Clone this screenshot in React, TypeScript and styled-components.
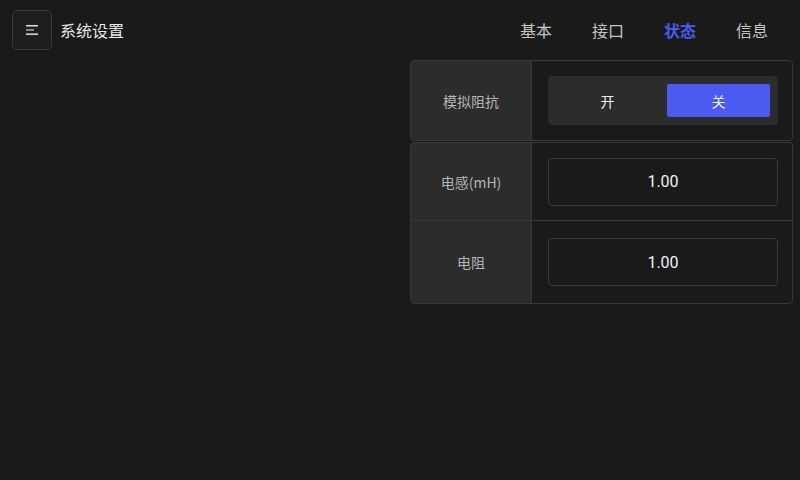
import React, { useState } from 'react';
import styled, { createGlobalStyle } from 'styled-components';

const GlobalStyle = createGlobalStyle`
  html, body {
    margin: 0;
    padding: 0;
    background: #1a1a1a;
  }
  body {
    font-family: "Noto Sans CJK SC", "Noto Sans", Roboto, sans-serif;
    color: #e6e6e6;
  }
`;

const Page = styled.div`
  width: 800px;
  height: 480px;
  background: #1a1a1a;
  display: flex;
  flex-direction: column;
`;

const TopBar = styled.div`
  height: 60px;
  box-sizing: border-box;
  padding: 10px 12px;
  display: flex;
  align-items: center;
  justify-content: space-between;
`;

const TitleGroup = styled.div`
  display: flex;
  align-items: center;
  gap: 8px;
`;

const MenuButton = styled.button`
  width: 40px;
  height: 40px;
  box-sizing: border-box;
  border: 1px solid #383838;
  border-radius: 5px;
  background: #1e1e1e;
  padding: 0;
  display: flex;
  align-items: center;
  justify-content: center;
`;

const Title = styled.span`
  font-size: 16px;
  color: #e8e8e8;
`;

const Tabs = styled.div`
  display: flex;
  align-items: center;
  gap: 40px;
  padding-right: 20px;
`;

const Tab = styled.span<{ $active?: boolean }>`
  font-size: 16px;
  color: ${(p) => (p.$active ? '#4b5bef' : '#c4c4c4')};
  font-weight: ${(p) => (p.$active ? 700 : 400)};
`;

const Main = styled.div`
  display: flex;
  justify-content: flex-end;
  padding-right: 7px;
`;

const Panel = styled.div`
  width: 383px;
  display: flex;
  flex-direction: column;
  gap: 1px;
`;

const Card = styled.div`
  border: 1px solid #383838;
  border-radius: 4px;
  overflow: hidden;
  display: flex;
  flex-direction: column;
`;

const Row = styled.div<{ $h: number }>`
  height: ${(p) => p.$h}px;
  display: flex;
  & + & {
    border-top: 1px solid #383838;
  }
`;

const Label = styled.div`
  width: 120px;
  flex-shrink: 0;
  background: #2c2c2c;
  border-right: 1px solid #383838;
  display: flex;
  align-items: center;
  justify-content: center;
  font-size: 14px;
  color: #b4b4b4;
`;

const Cell = styled.div`
  flex: 1;
  display: flex;
  align-items: center;
  padding: 0 14px 0 16px;
`;

const Segment = styled.div`
  flex: 1;
  height: 49px;
  box-sizing: border-box;
  background: #2c2c2c;
  border-radius: 4px;
  padding: 8px;
  display: flex;
  gap: 8px;
`;

const SegButton = styled.div<{ $active?: boolean }>`
  flex: 1;
  display: flex;
  align-items: center;
  justify-content: center;
  border-radius: 2px;
  font-size: 14px;
  color: #ececec;
  background: ${(p) => (p.$active ? '#4b5bef' : 'transparent')};
`;

const ValueBox = styled.div`
  flex: 1;
  height: 48px;
  box-sizing: border-box;
  border: 1px solid #3a3a3a;
  border-radius: 4px;
  display: flex;
  align-items: center;
  justify-content: center;
  font-family: Roboto, "Noto Sans", sans-serif;
  font-size: 16px;
  color: #f2f2f2;
`;

const MenuIcon = () => (
  <svg width="14" height="12" viewBox="0 0 14 12">
    <rect x="1" y="1" width="12" height="1.5" fill="#e0e0e0" />
    <rect x="1" y="5.2" width="8" height="1.5" fill="#a8a8a8" />
    <rect x="1" y="9.4" width="12" height="1.5" fill="#e0e0e0" />
  </svg>
);

const tabs = ['基本', '接口', '状态', '信息'];

const App: React.FC = () => {
  const [on, setOn] = useState(false);
  const [tab, setTab] = useState('状态');

  return (
    <Page>
      <GlobalStyle />
      <TopBar>
        <TitleGroup>
          <MenuButton>
            <MenuIcon />
          </MenuButton>
          <Title>系统设置</Title>
        </TitleGroup>
        <Tabs>
          {tabs.map((t) => (
            <Tab key={t} $active={t === tab} onClick={() => setTab(t)}>
              {t}
            </Tab>
          ))}
        </Tabs>
      </TopBar>
      <Main>
        <Panel>
          <Card>
            <Row $h={79}>
              <Label>模拟阻抗</Label>
              <Cell>
                <Segment>
                  <SegButton $active={on} onClick={() => setOn(true)}>开</SegButton>
                  <SegButton $active={!on} onClick={() => setOn(false)}>关</SegButton>
                </Segment>
              </Cell>
            </Row>
          </Card>
          <Card>
            <Row $h={77}>
              <Label>电感(mH)</Label>
              <Cell>
                <ValueBox>1.00</ValueBox>
              </Cell>
            </Row>
            <Row $h={82}>
              <Label>电阻</Label>
              <Cell>
                <ValueBox>1.00</ValueBox>
              </Cell>
            </Row>
          </Card>
        </Panel>
      </Main>
    </Page>
  );
};

export default App;
